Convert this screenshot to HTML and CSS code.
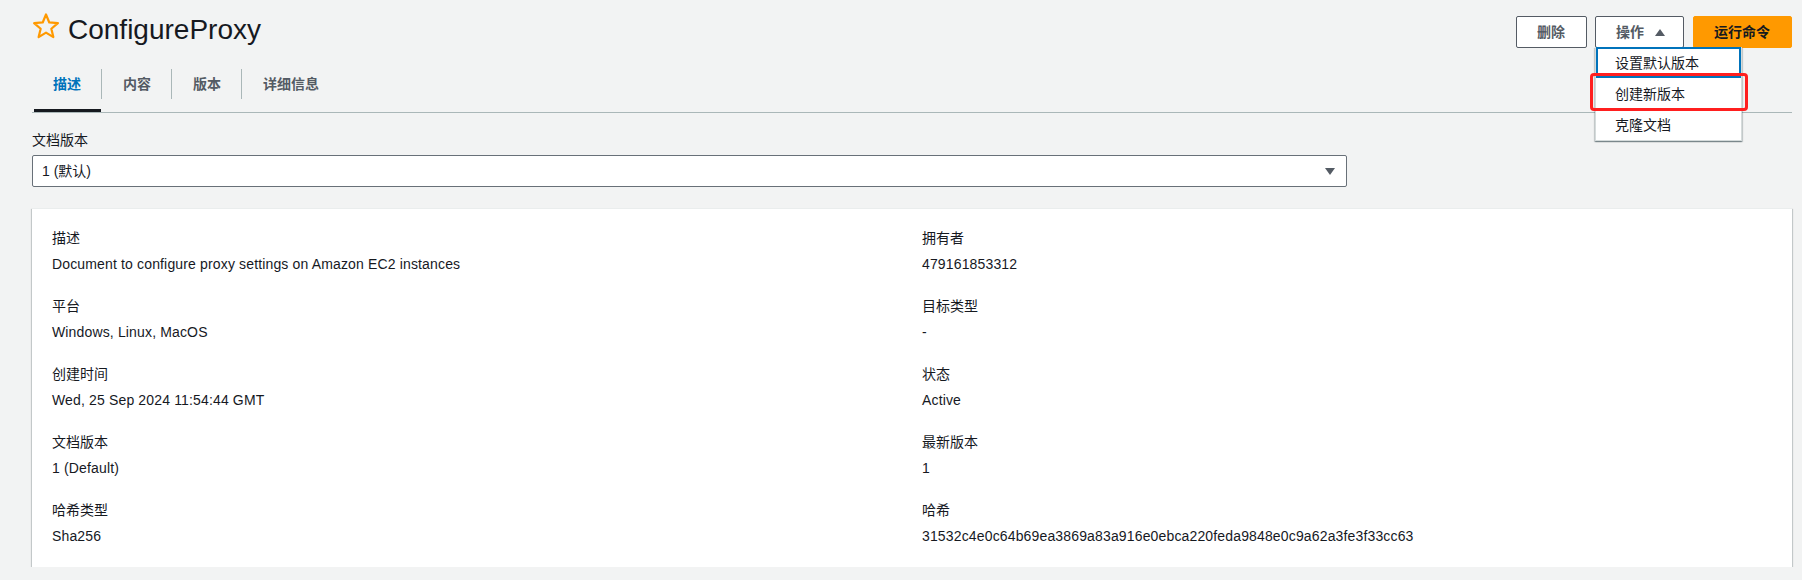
FILE: index.html
```html
<!DOCTYPE html>
<html lang="zh-CN">
<head>
<meta charset="utf-8">
<title>ConfigureProxy</title>
<link rel="stylesheet" href="styles.css">
</head>
<body>
<div class="page">
  <header class="header">
    <div class="title-wrap">
      <svg class="star" width="28" height="26" viewBox="0 0 28 26" aria-hidden="true">
        <path d="M14 1.5 L17.29 9.47 L25.89 10.14 L19.33 15.73 L21.35 24.11 L14 19.6 L6.65 24.11 L8.67 15.73 L2.11 10.14 L10.71 9.47 Z" fill="none" stroke="#ff9900" stroke-width="2.2" stroke-linejoin="round"/>
      </svg>
      <h1 class="title">ConfigureProxy</h1>
    </div>
    <div class="actions">
      <button class="btn">删除</button>
      <div class="dropdown">
        <button class="btn btn-caret">操作<svg class="caret" width="10" height="7" viewBox="0 0 10 7" aria-hidden="true"><polygon points="0,7 10,7 5,0" fill="#545b64"/></svg></button>
        <div class="menu">
          <div class="menu-item is-focused">设置默认版本</div>
          <div class="menu-item">创建新版本</div>
          <div class="menu-item">克隆文档</div>
          <div class="annotation"></div>
        </div>
      </div>
      <button class="btn btn-primary">运行命令</button>
    </div>
  </header>

  <nav class="tabs">
    <a class="tab is-active">描述</a>
    <span class="tab-sep"></span>
    <a class="tab">内容</a>
    <span class="tab-sep"></span>
    <a class="tab">版本</a>
    <span class="tab-sep"></span>
    <a class="tab">详细信息</a>
  </nav>

  <div class="field">
    <div class="field-label">文档版本</div>
    <div class="select">
      <span class="select-value">1 (默认)</span>
      <svg class="select-arrow" width="10" height="7" viewBox="0 0 10 7" aria-hidden="true"><polygon points="0,0 10,0 5,7" fill="#545b64"/></svg>
    </div>
  </div>

  <section class="card">
    <div class="kv-grid">
      <div class="kv"><div class="kv-label">描述</div><div class="kv-value">Document to configure proxy settings on Amazon EC2 instances</div></div>
      <div class="kv"><div class="kv-label">拥有者</div><div class="kv-value">479161853312</div></div>
      <div class="kv"><div class="kv-label">平台</div><div class="kv-value">Windows, Linux, MacOS</div></div>
      <div class="kv"><div class="kv-label">目标类型</div><div class="kv-value">-</div></div>
      <div class="kv"><div class="kv-label">创建时间</div><div class="kv-value">Wed, 25 Sep 2024 11:54:44 GMT</div></div>
      <div class="kv"><div class="kv-label">状态</div><div class="kv-value">Active</div></div>
      <div class="kv"><div class="kv-label">文档版本</div><div class="kv-value">1 (Default)</div></div>
      <div class="kv"><div class="kv-label">最新版本</div><div class="kv-value">1</div></div>
      <div class="kv"><div class="kv-label">哈希类型</div><div class="kv-value">Sha256</div></div>
      <div class="kv"><div class="kv-label">哈希</div><div class="kv-value">31532c4e0c64b69ea3869a83a916e0ebca220feda9848e0c9a62a3fe3f33cc63</div></div>
    </div>
  </section>
</div>
</body>
</html>
```

FILE: styles.css
```css
* { box-sizing: border-box; }

html, body {
  margin: 0;
  padding: 0;
  background: #f2f3f3;
}

body {
  font-family: "Liberation Sans", "Noto Sans CJK SC", sans-serif;
  font-size: 14px;
  line-height: 22px;
  color: #16191f;
}

.page {
  padding: 0 10px 0 32px;
}

/* Header */
.header {
  display: flex;
  justify-content: space-between;
  align-items: flex-start;
  padding-top: 12px;
}

.title-wrap {
  display: flex;
  align-items: flex-start;
}

.star {
  display: block;
  margin-top: 1px;
  margin-right: 8px;
}

.title {
  margin: 0;
  font-size: 28px;
  line-height: 36px;
  font-weight: normal;
  color: #16191f;
}

.actions {
  display: flex;
  align-items: flex-start;
  gap: 8px;
  margin-top: 4px;
}

.btn {
  display: inline-flex;
  align-items: center;
  height: 32px;
  padding: 4px 21px 4px 20px;
  border: 1px solid #545b64;
  border-radius: 2px;
  background: #ffffff;
  color: #545b64;
  font-family: inherit;
  font-size: 14px;
  line-height: 22px;
  font-weight: bold;
  cursor: pointer;
}

.btn-caret {
  padding-right: 18px;
}

.caret {
  display: block;
  margin-left: 11px;
}

.btn-primary {
  background: #ff9900;
  border-color: #ff9900;
  color: #16191f;
}

.actions .btn-primary {
  margin-left: 1px;
}

.dropdown {
  position: relative;
}

.menu {
  position: absolute;
  top: 31px;
  left: 0;
  width: 147px;
  background: #ffffff;
  border: 1px solid #d5dbdb;
  border-top: none;
  box-shadow: 0 1px 1px 0 rgba(0, 28, 36, 0.3), 1px 1px 1px 0 rgba(0, 28, 36, 0.15), -1px 1px 1px 0 rgba(0, 28, 36, 0.15);
  z-index: 5;
}

.menu-item {
  height: 31px;
  padding: 0 19px;
  display: flex;
  align-items: center;
  color: #16191f;
  white-space: nowrap;
}

.menu-item.is-focused {
  outline: 2px solid #0073bb;
  outline-offset: -2px;
}

.annotation {
  position: absolute;
  left: -6px;
  top: 26px;
  width: 158px;
  height: 38px;
  border: 3px solid #ff1f1f;
  border-radius: 4px;
}

/* Tabs */
.tabs {
  display: flex;
  align-items: flex-start;
  margin-top: 11px;
  border-bottom: 1px solid #aab7b8;
}

.tab {
  display: flex;
  align-items: center;
  height: 53px;
  padding: 0 20px 0 21px;
  border-bottom: 3px solid transparent;
  font-weight: bold;
  color: #545b64;
  white-space: nowrap;
  cursor: pointer;
}

.tab.is-active {
  color: #0073bb;
  border-bottom-color: #16191f;
  margin-left: 2px;
  padding-left: 19px;
}

.tab-sep {
  width: 1px;
  height: 30px;
  margin-top: 10px;
  background: #aab7b8;
}

/* Field */
.field {
  margin-top: 16px;
}

.field-label {
  line-height: 22px;
  color: #16191f;
  margin-bottom: 4px;
}

.select {
  width: 1315px;
  height: 32px;
  display: flex;
  align-items: center;
  justify-content: space-between;
  padding: 4px 11px 4px 9px;
  background: #ffffff;
  border: 1px solid #687078;
  border-radius: 2px;
}

.select-arrow {
  display: block;
}

/* Card */
.card {
  margin-top: 21px;
  background: #ffffff;
  border-top: 1px solid #eaeded;
  padding: 18px 20px 20px;
  box-shadow: 0 1px 1px 0 rgba(0, 28, 36, 0.3), 1px 1px 1px 0 rgba(0, 28, 36, 0.15), -1px 1px 1px 0 rgba(0, 28, 36, 0.15);
}

.kv-grid {
  display: grid;
  grid-template-columns: 1fr 1fr;
  column-gap: 20px;
  row-gap: 20px;
}

.kv-label {
  line-height: 22px;
  color: #16191f;
  margin-bottom: 4px;
}

.kv-value {
  line-height: 22px;
  color: #16191f;
  letter-spacing: 0.15px;
}
```
